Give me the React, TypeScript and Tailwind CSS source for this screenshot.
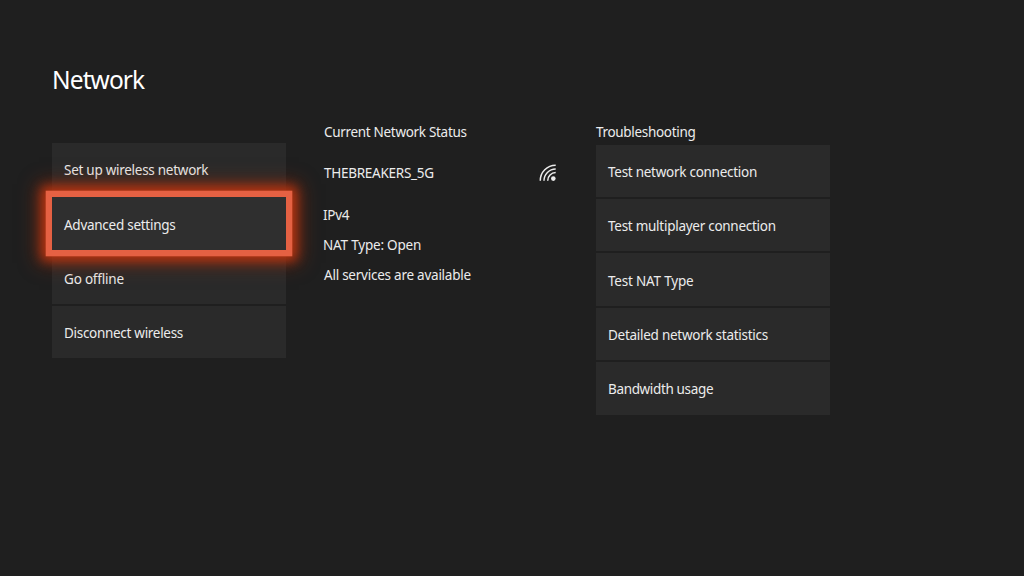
import React from 'react';
import clsx from 'clsx';

interface MenuItem {
    label: string;
    tracking?: string;
    focused?: boolean;
}

interface MenuListProps {
    items: MenuItem[];
}

const CONNECTION_ITEMS: MenuItem[] = [
    { label: 'Set up wireless network' },
    { label: 'Advanced settings', focused: true },
    { label: 'Go offline', tracking: 'tracking-[-0.2px]' },
    { label: 'Disconnect wireless', tracking: 'tracking-[-0.3px]' },
];

const TROUBLESHOOTING_ITEMS: MenuItem[] = [
    { label: 'Test network connection' },
    { label: 'Test multiplayer connection' },
    { label: 'Test NAT Type', tracking: 'tracking-[-0.2px]' },
    { label: 'Detailed network statistics' },
    { label: 'Bandwidth usage', tracking: 'tracking-[-0.35px]' },
];

const MenuList: React.FC<MenuListProps> = ({ items }) => (
    <ul className="flex flex-col gap-[2px]">
        {items.map(({ label, tracking, focused }) => (
            <li key={label}>
                <button
                    className={clsx(
                        'flex h-[52.4px] w-[234px] items-center px-3 text-left outline-none',
                        tracking,
                        focused
                            ? 'relative z-10 bg-[#2f2f2f] pt-[3px] shadow-[0_0_0_6.3px_#e56143,0_0_10px_10px_#b43412,0_0_18px_13px_#a02e0cb0]'
                            : 'bg-[#2a2a2a] pt-[2px]'
                    )}
                >
                    {label}
                </button>
            </li>
        ))}
    </ul>
);

/** Wireless signal fanning out from the lower right corner. */
const SignalIcon: React.FC = () => (
    <svg className="h-[18px] w-[18px]" viewBox="0 0 18 18" fill="none" stroke="currentColor" strokeWidth={1.5}>
        <path d="M1.3 16.8A15.4 15.4 0 0 1 16.7 1.2" />
        <path d="M5 16.8A11.8 11.8 0 0 1 16.7 4.9" />
        <path d="M8.7 16.8A8.1 8.1 0 0 1 16.7 8.6" />
        <circle cx="14.3" cy="14.6" r="2.3" fill="currentColor" stroke="none" />
    </svg>
);

export default function App() {
    return (
        <main className="h-[576px] w-[1024px] overflow-hidden bg-[#1f1f1f] pl-[52px] pt-[62px] font-['Noto_Sans','Open_Sans',sans-serif] text-[13.5px] leading-5 tracking-[-0.27px] text-[#ececec]">
            <h1 className="h-[60px] text-[24.5px] leading-9 tracking-[-0.9px] text-white">Network</h1>

            <div className="flex items-start">
                <section className="w-[271px] pt-[20.8px]">
                    <MenuList items={CONNECTION_ITEMS} />
                </section>

                <section className="w-[273px]">
                    <h2 className="pl-px tracking-[-0.31px]">Current Network Status</h2>
                    <div className="mt-[21px] flex h-5 w-[234px] items-center justify-between">
                        <span className="pl-px">THEBREAKERS_5G</span>
                        <SignalIcon />
                    </div>
                    <p className="mt-[22px]">IPv4</p>
                    <p className="mt-[10px] tracking-[-0.2px]">NAT Type: Open</p>
                    <p className="mt-[10px] pl-px tracking-[-0.24px]">All services are available</p>
                </section>

                <section>
                    <h2 className="mb-[2.7px] tracking-[-0.32px]">Troubleshooting</h2>
                    <MenuList items={TROUBLESHOOTING_ITEMS} />
                </section>
            </div>
        </main>
    );
}
